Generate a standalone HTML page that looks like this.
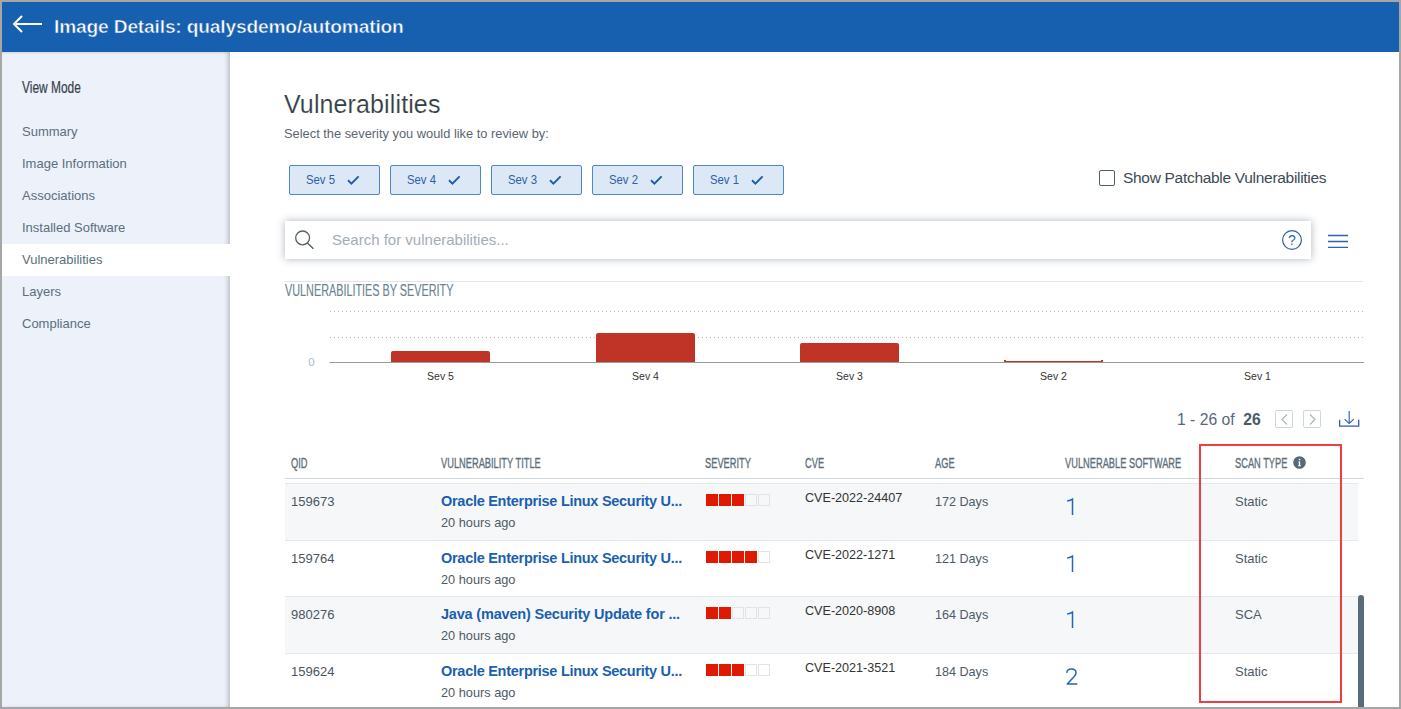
<!DOCTYPE html>
<html><head><meta charset="utf-8">
<style>
*{margin:0;padding:0;box-sizing:border-box}
html,body{width:1401px;height:709px;overflow:hidden}
body{background:#a6a6a6;font-family:"Liberation Sans",sans-serif;position:relative}
.abs{position:absolute;white-space:nowrap}
#frame{position:absolute;left:2px;top:2px;width:1397px;height:705px;background:#fff;overflow:hidden}
#hdr{position:absolute;left:0;top:0;width:1397px;height:50px;background:#1660af}
#side{position:absolute;left:0;top:50px;width:228px;height:655px;background:#edf1f9;box-shadow:inset -4px 0 5px -2px rgba(0,0,0,.22), inset 0 3px 3px -2px rgba(0,0,0,.07)}
.cond{display:inline-block;transform-origin:0 0;-webkit-text-stroke:0.35px currentColor}
.sitem{position:absolute;left:20px;margin-top:2px;font-size:13px;color:#5a6f7e}
.sev{position:absolute;top:163px;width:91px;height:30px;border:1px solid #4f87c6;border-radius:2px;background:#dce8f5;color:#2c5fa6;font-size:13px}
.sev span{position:absolute;left:16px;top:7px;font-size:12.6px;transform:scaleX(.9);transform-origin:0 0}
.sev svg{position:absolute;left:57px;top:9px}
.th{position:absolute;top:453px;color:#5c6f7c;font-size:14.4px}
.th .cond{transform:scaleX(.645)}
.row{position:absolute;left:283px;width:1073px;height:56px}
.qid{position:absolute;left:6px;font-size:13px;color:#4a5560}
.ttl{position:absolute;left:156px;font-size:14.5px;letter-spacing:-0.28px;font-weight:bold;color:#1a5fb0}
.ago{position:absolute;left:156px;font-size:12.75px;color:#4e5a64}
.cve{position:absolute;left:520px;font-size:12.6px;color:#333}
.age{position:absolute;left:650px;font-size:12.6px;color:#4e5a64}
.cnt{position:absolute;left:780px;font-size:23px;color:#3a74b8}
.scan{position:absolute;left:950px;font-size:13px;color:#4e5a64}
.sq{position:absolute;width:12px;height:12px}
.sq.f{background:#df1a00}
.sq.e{border:1px solid #dde4ea}
</style></head><body>
<div id="frame">
  <div id="hdr">
    <svg class="abs" style="left:10px;top:12px" width="32" height="20" viewBox="0 0 32 20"><path d="M10 2 L2 10 L10 18 M2 10 H30" stroke="#fff" stroke-width="2" fill="none"/></svg>
    <div class="abs" id="t_hdr" style="left:52px;top:14px;font-size:19.2px;letter-spacing:-0.18px;color:#fff;font-weight:bold;-webkit-text-stroke:0.5px #1660af">Image Details: qualysdemo/automation</div>
  </div>
  <div id="side">
    <div class="abs" id="t_vm" style="left:20px;top:27px;font-size:15.6px;color:#36434c"><span class="cond" style="transform:scaleX(.765);-webkit-text-stroke:0.2px currentColor">View Mode</span></div>
    <div class="sitem" style="top:70px">Summary</div>
    <div class="sitem" style="top:102px">Image Information</div>
    <div class="sitem" style="top:134px">Associations</div>
    <div class="sitem" style="top:166px">Installed Software</div>
    <div style="position:absolute;left:0;top:192px;width:228px;height:32px;background:#fff"></div>
    <div class="sitem" style="top:198px">Vulnerabilities</div>
    <div class="sitem" style="top:230px">Layers</div>
    <div class="sitem" style="top:262px">Compliance</div>
  </div>
  <div class="abs" id="t_title" style="left:282px;top:88px;font-size:25px;letter-spacing:0.12px;color:#333d45;-webkit-text-stroke:0.15px #fff">Vulnerabilities</div>
  <div class="abs" id="t_sel" style="left:282px;top:124px;font-size:12.85px;color:#5a6670">Select the severity you would like to review by:</div>

  <div class="sev" style="left:287px"><span>Sev 5</span><svg width="14" height="12" viewBox="0 0 14 12"><path d="M1 5.3 L4.4 8.6 L11.6 1.3" stroke="#2159ab" stroke-width="1.9" fill="none"/></svg></div>
  <div class="sev" style="left:388px"><span>Sev 4</span><svg width="14" height="12" viewBox="0 0 14 12"><path d="M1 5.3 L4.4 8.6 L11.6 1.3" stroke="#2159ab" stroke-width="1.9" fill="none"/></svg></div>
  <div class="sev" style="left:489px"><span>Sev 3</span><svg width="14" height="12" viewBox="0 0 14 12"><path d="M1 5.3 L4.4 8.6 L11.6 1.3" stroke="#2159ab" stroke-width="1.9" fill="none"/></svg></div>
  <div class="sev" style="left:590px"><span>Sev 2</span><svg width="14" height="12" viewBox="0 0 14 12"><path d="M1 5.3 L4.4 8.6 L11.6 1.3" stroke="#2159ab" stroke-width="1.9" fill="none"/></svg></div>
  <div class="sev" style="left:691px"><span>Sev 1</span><svg width="14" height="12" viewBox="0 0 14 12"><path d="M1 5.3 L4.4 8.6 L11.6 1.3" stroke="#2159ab" stroke-width="1.9" fill="none"/></svg></div>

  <div class="abs" style="left:1097px;top:168px;width:16px;height:16px;border:1.5px solid #4e5f6c;border-radius:2px"></div>
  <div class="abs" id="t_patch" style="left:1121px;top:167px;font-size:15.5px;letter-spacing:-0.3px;color:#3c4a55">Show Patchable Vulnerabilities</div>

  <div class="abs" style="left:283px;top:219px;width:1026px;height:38px;background:#fff;box-shadow:0 0 8px 0 rgba(50,70,90,.4)">
    <svg class="abs" style="left:8px;top:8px" width="24" height="24" viewBox="0 0 24 24"><circle cx="9.6" cy="8.9" r="6.9" stroke="#56616c" stroke-width="1.3" fill="none"/><path d="M14.4 13.9 L20.4 19.8" stroke="#56616c" stroke-width="1.4"/></svg>
    <div class="abs" id="t_search" style="left:47px;top:10px;font-size:15px;color:#a3adb6">Search for vulnerabilities...</div>
    <svg class="abs" style="left:996px;top:8px" width="22" height="22" viewBox="0 0 22 22"><circle cx="11" cy="11" r="9.4" stroke="#2a5db0" stroke-width="1.2" fill="none"/><text x="11" y="16" text-anchor="middle" font-family="Liberation Sans" font-size="14" fill="#2f64ad">?</text></svg>
  </div>
  <svg class="abs" style="left:1325px;top:232px" width="22" height="14" viewBox="0 0 22 14"><path d="M1 1.5H21M1 7.5H21M1 13.5H21" stroke="#2f64ad" stroke-width="1.4"/></svg>

  <div class="abs" style="left:283px;top:279px;width:1078px;height:1px;background:#dfe5e9"></div>
  <div class="abs" id="t_vbs" style="left:283px;top:280px;font-size:15.9px;color:#6a8392"><span class="cond" style="transform:scaleX(.682);-webkit-text-stroke:0.15px currentColor">VULNERABILITIES BY SEVERITY</span></div>

  <!-- chart -->
  <svg class="abs" style="left:0;top:0" width="1397" height="705" viewBox="2 2 1397 705">
    <line x1="330" y1="311.5" x2="1364" y2="311.5" stroke="#b4b8bb" stroke-width="1" stroke-dasharray="1 3"/>
    <line x1="330" y1="337.5" x2="1364" y2="337.5" stroke="#b4b8bb" stroke-width="1" stroke-dasharray="1 3"/>
    <path d="M391 362 V353 a2 2 0 0 1 2 -2 H488 a2 2 0 0 1 2 2 V362Z" fill="#c03327"/>
    <path d="M596 362 V335 a2 2 0 0 1 2 -2 H693 a2 2 0 0 1 2 2 V362Z" fill="#c03327"/>
    <path d="M800 362 V345 a2 2 0 0 1 2 -2 H897 a2 2 0 0 1 2 2 V362Z" fill="#c03327"/>
    <rect x="1004" y="361" width="99" height="1" fill="#c03327"/><rect x="1004" y="360" width="2" height="1" fill="#c03327"/><rect x="1101" y="360" width="2" height="1" fill="#c03327"/>
    <line x1="329.5" y1="362.5" x2="1364" y2="362.5" stroke="#9a9a9a" stroke-width="1"/>
    <text x="311.5" y="365.5" text-anchor="middle" font-family="Liberation Sans" font-size="11.5" fill="#a9bac9">0</text>
    <text x="440.5" y="379.8" text-anchor="middle" font-family="Liberation Sans" font-size="10.5" fill="#333">Sev 5</text>
    <text x="645.5" y="379.8" text-anchor="middle" font-family="Liberation Sans" font-size="10.5" fill="#333">Sev 4</text>
    <text x="849.5" y="379.8" text-anchor="middle" font-family="Liberation Sans" font-size="10.5" fill="#333">Sev 3</text>
    <text x="1053.5" y="379.8" text-anchor="middle" font-family="Liberation Sans" font-size="10.5" fill="#333">Sev 2</text>
    <text x="1257.5" y="379.8" text-anchor="middle" font-family="Liberation Sans" font-size="10.5" fill="#333">Sev 1</text>
  </svg>

  <!-- pagination -->
  <div class="abs" id="t_pg" style="left:1175px;top:409px;font-size:15.7px;color:#56687a">1 - 26 of&nbsp; <b style="color:#485a68">26</b></div>
  <div class="abs" style="left:1273px;top:408px;width:18px;height:18px;border:1px solid #cbd6de;border-radius:2px"><svg class="abs" style="left:4px;top:3px" width="9" height="11" viewBox="0 0 9 11"><path d="M7 0.5 L2 5.5 L7 10.5" stroke="#a8b6c0" stroke-width="1.2" fill="none"/></svg></div>
  <div class="abs" style="left:1301px;top:408px;width:18px;height:18px;border:1px solid #cbd6de;border-radius:2px"><svg class="abs" style="left:4px;top:3px" width="9" height="11" viewBox="0 0 9 11"><path d="M2 0.5 L7 5.5 L2 10.5" stroke="#a8b6c0" stroke-width="1.2" fill="none"/></svg></div>
  <svg class="abs" style="left:1337px;top:409px" width="21" height="17" viewBox="0 0 21 17"><path d="M10.2 0 V12.3 M5.6 8.1 L10.2 12.5 L14.8 8.1" stroke="#2f66b8" stroke-width="1.15" fill="none"/><path d="M0.6 8.8 V15.2 H19.7 V8.8" stroke="#3a55b0" stroke-width="1.3" fill="none"/></svg>

  <!-- table header -->
  <div class="th" style="left:289px"><span class="cond">QID</span></div>
  <div class="th" style="left:439px"><span class="cond">VULNERABILITY TITLE</span></div>
  <div class="th" style="left:703px"><span class="cond">SEVERITY</span></div>
  <div class="th" style="left:803px"><span class="cond">CVE</span></div>
  <div class="th" style="left:933px"><span class="cond">AGE</span></div>
  <div class="th" style="left:1063px"><span class="cond">VULNERABLE SOFTWARE</span></div>
  <div class="th" style="left:1233px"><span class="cond">SCAN TYPE</span></div>
  <svg class="abs" style="left:1291px;top:454px" width="13" height="13" viewBox="0 0 13 13"><circle cx="6.5" cy="6.5" r="6.3" fill="#55697a"/><path d="M5.2 5.4 H7.2 V9.4 H8 V10.2 H5 V9.4 H5.8 V6.2 H5.2Z" fill="#fff"/><rect x="5.9" y="2.9" width="1.4" height="1.4" fill="#fff"/></svg>
  <div class="abs" style="left:283px;top:476px;width:1079px;height:1px;background:#cdd6de"></div>
  <!-- rows -->
  <div class="row" style="top:481px;height:56.67px;background:#f5f7f9">
    <div class="qid" style="top:11px">159673</div>
    <div class="ttl" style="top:10px">Oracle Enterprise Linux Security U...</div>
    <div class="ago" style="top:32px">20 hours ago</div>
    <div class="sq f" style="left:421px;top:11px"></div><div class="sq f" style="left:434px;top:11px"></div><div class="sq f" style="left:447px;top:11px"></div><div class="sq e" style="left:460px;top:11px"></div><div class="sq e" style="left:473px;top:11px"></div>
    <div class="cve" style="top:8px">CVE-2022-24407</div>
    <div class="age" style="top:12px">172 Days</div>
    <svg style="position:absolute;left:779px;top:13px" width="16" height="21" viewBox="0 0 16 21"><path d="M3.2 5.1 C5 4.7 7 4.1 8.5 3.1 V18.9" stroke="#2566b8" stroke-width="1.5" fill="none"/></svg>
    <div class="scan" style="top:11px">Static</div>
    <div style="position:absolute;left:0;top:0;width:1073px;height:1px;background:#e4e9ed"></div>
  </div>
  <div class="row" style="top:538px;height:56.67px;background:#fff">
    <div class="qid" style="top:11px">159764</div>
    <div class="ttl" style="top:10px">Oracle Enterprise Linux Security U...</div>
    <div class="ago" style="top:32px">20 hours ago</div>
    <div class="sq f" style="left:421px;top:11px"></div><div class="sq f" style="left:434px;top:11px"></div><div class="sq f" style="left:447px;top:11px"></div><div class="sq f" style="left:460px;top:11px"></div><div class="sq e" style="left:473px;top:11px"></div>
    <div class="cve" style="top:8px">CVE-2022-1271</div>
    <div class="age" style="top:12px">121 Days</div>
    <svg style="position:absolute;left:779px;top:13px" width="16" height="21" viewBox="0 0 16 21"><path d="M3.2 5.1 C5 4.7 7 4.1 8.5 3.1 V18.9" stroke="#2566b8" stroke-width="1.5" fill="none"/></svg>
    <div class="scan" style="top:11px">Static</div>
    <div style="position:absolute;left:0;top:0;width:1073px;height:1px;background:#e4e9ed"></div>
  </div>
  <div class="row" style="top:594.2px;height:56.67px;background:#f5f7f9">
    <div class="qid" style="top:11px">980276</div>
    <div class="ttl" style="top:10px;letter-spacing:-0.19px">Java (maven) Security Update for ...</div>
    <div class="ago" style="top:32px">20 hours ago</div>
    <div class="sq f" style="left:421px;top:11px"></div><div class="sq f" style="left:434px;top:11px"></div><div class="sq e" style="left:447px;top:11px"></div><div class="sq e" style="left:460px;top:11px"></div><div class="sq e" style="left:473px;top:11px"></div>
    <div class="cve" style="top:8px">CVE-2020-8908</div>
    <div class="age" style="top:12px">164 Days</div>
    <svg style="position:absolute;left:779px;top:13px" width="16" height="21" viewBox="0 0 16 21"><path d="M3.2 5.1 C5 4.7 7 4.1 8.5 3.1 V18.9" stroke="#2566b8" stroke-width="1.5" fill="none"/></svg>
    <div class="scan" style="top:11px">SCA</div>
    <div style="position:absolute;left:0;top:0;width:1073px;height:1px;background:#e4e9ed"></div>
  </div>
  <div class="row" style="top:651.33px;height:56.67px;background:#fff">
    <div class="qid" style="top:11px">159624</div>
    <div class="ttl" style="top:10px">Oracle Enterprise Linux Security U...</div>
    <div class="ago" style="top:32px">20 hours ago</div>
    <div class="sq f" style="left:421px;top:11px"></div><div class="sq f" style="left:434px;top:11px"></div><div class="sq f" style="left:447px;top:11px"></div><div class="sq e" style="left:460px;top:11px"></div><div class="sq e" style="left:473px;top:11px"></div>
    <div class="cve" style="top:8px">CVE-2021-3521</div>
    <div class="age" style="top:12px">184 Days</div>
    <svg style="position:absolute;left:779px;top:13px" width="16" height="21" viewBox="0 0 16 21"><path d="M2.8 6.9 C2.9 4.3 4.8 2.9 7.5 2.9 C10.2 2.9 12 4.5 12 6.7 C12 8.2 11.3 9.3 10.2 10.5 L3.3 18 H13.3" stroke="#2566b8" stroke-width="1.5" stroke-linejoin="round" fill="none"/></svg>
    <div class="scan" style="top:11px">Static</div>
    <div style="position:absolute;left:0;top:0;width:1073px;height:1px;background:#e4e9ed"></div>
  </div>
  <!-- /rows -->
  <!-- overlay -->
  <div class="abs" style="left:1356px;top:593px;width:6px;height:120px;background:#566c7a;border-radius:3px"></div>
  <div class="abs" style="left:1197px;top:442px;width:143px;height:259px;border:2px solid #ee3e3e"></div>
</div>
</body></html>
